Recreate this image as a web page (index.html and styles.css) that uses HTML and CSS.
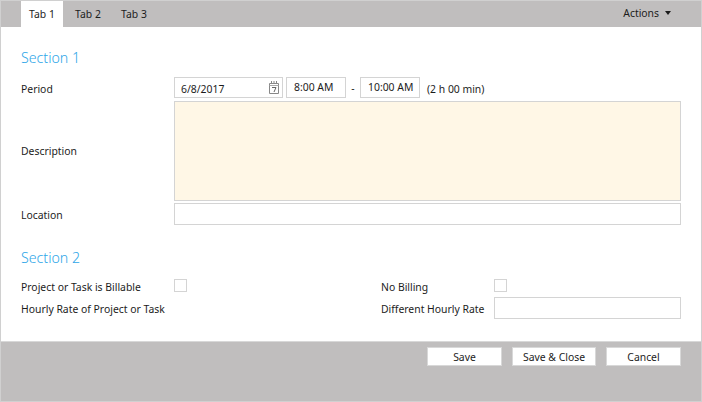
FILE: index.html
```html
<!DOCTYPE html>
<html lang="en">
<head>
  <meta charset="UTF-8" />
  <title>Edit entry</title>
  <link rel="stylesheet" href="styles.css">
</head>
<body>
  <div class="dialog">
    <div class="tabbar">
      <a class="tab active">Tab 1</a>
      <a class="tab">Tab 2</a>
      <a class="tab">Tab 3</a>
      <a class="actions">Actions<span class="caret"></span></a>
    </div>

    <div class="content">
      <h2 class="section-one">Section 1</h2>
      <div class="row period-row">
        <label class="low">Period</label>
        <div class="period">
          <div class="box date">
            <span>6/8/2017</span>
            <svg class="cal" width="10" height="13" viewBox="0 0 10 13">
              <path d="M0.5 2.5h9v10h-9z" fill="none" stroke="#888" />
              <path d="M0.5 4.5h9" stroke="#aaa" />
              <path d="M2.5 0v3M5 0v3M7.5 0v3" stroke="#888" />
              <path d="M3 6.5h4l-2 4.5" fill="none" stroke="#666" />
            </svg>
          </div>
          <div class="box time">8:00 AM</div>
          <span class="dash">-</span>
          <div class="box time">10:00 AM</div>
          <span class="duration">(2 h 00 min)</span>
        </div>
      </div>
      <div class="row desc-row">
        <label class="flat">Description</label>
        <div class="box desc"></div>
      </div>
      <div class="row loc-row">
        <label>Location</label>
        <div class="box field"></div>
      </div>

      <h2 class="section-two">Section 2</h2>
      <div class="columns">
        <label class="low">Project or Task is Billable</label>
        <div class="check"></div>
        <label class="low">No Billing</label>
        <div class="check"></div>
        <label>Hourly Rate of Project or Task</label>
        <div></div>
        <label>Different Hourly Rate</label>
        <div class="box field"></div>
      </div>
    </div>

    <div class="footer">
      <button class="btn save">Save</button>
      <button class="btn close">Save &amp; Close</button>
      <button class="btn save">Cancel</button>
    </div>
  </div>
</body>
</html>
```

FILE: styles.css
```css
* { box-sizing: border-box; }

body {
  margin: 0;
  font-family: "Noto Sans", "Open Sans", sans-serif;
  font-size: 10.4px;
  color: #1c1c1c;
  background: white;
}

label {
  white-space: nowrap;
  padding-top: 1px;
}
label.low { padding-top: 3px; }
label.flat { padding-top: 0; }

.dialog {
  width: 702px;
  height: 402px;
  border: 1px solid #d0d0d0;
  display: flex;
  flex-direction: column;
}

.tabbar {
  height: 26px;
  background: #c0bebe;
  display: flex;
  padding-left: 20px;
  flex: none;
}
.tab {
  width: 42px;
  height: 26px;
  line-height: 27px;
  text-align: center;
  margin-right: 4px;
}
.tab.active { background: white; }
.actions {
  margin-left: auto;
  margin-right: 30px;
  line-height: 24px;
}
.caret {
  display: inline-block;
  width: 0;
  height: 0;
  margin-left: 6px;
  vertical-align: 2px;
  border-left: 3.5px solid transparent;
  border-right: 3.5px solid transparent;
  border-top: 4px solid #1c1c1c;
}

.content {
  flex: 1;
  padding: 0 20px;
}
h2 {
  margin: 0;
  font-size: 14.2px;
  font-weight: 300;
  color: #2ea6e8;
  line-height: 20px;
}
.section-one { margin-top: 21px; margin-bottom: 9px; }
.section-two { margin-top: 23px; margin-bottom: 10px; }

.row {
  display: grid;
  grid-template-columns: 153px 507px;
  align-items: center;
}
.desc-row { margin-top: 3px; }
.loc-row { margin-top: 2px; }

.box {
  border: 1px solid #d4d4d4;
  background: white;
}
.period { display: flex; align-items: center; }
.date {
  width: 109px;
  height: 21px;
  padding: 0 3px 0 6px;
  display: flex;
  align-items: center;
  justify-content: space-between;
}
.date span { padding-top: 2px; }
.time {
  width: 60px;
  height: 21px;
  line-height: 19px;
  padding-left: 7px;
}
.date + .time { margin-left: 3px; }
.dash {
  width: 14px;
  text-align: center;
  padding-top: 1px;
}
.duration {
  margin-left: 7px;
  padding-top: 2px;
}
.desc { height: 100px; background: #fff7e6; }
.field { height: 22px; }

.columns {
  display: grid;
  grid-template-columns: 153px 207px 113px 187px;
  grid-template-rows: 15px 22px;
  row-gap: 4px;
  align-items: center;
}
.check {
  width: 13px;
  height: 13px;
  border: 1px solid #d4d4d4;
}

.footer {
  height: 60px;
  flex: none;
  background: #c0bebe;
  border-top: 1px solid #d8d8d8;
  display: flex;
  justify-content: flex-end;
  gap: 10px;
  padding: 5px 20px 0 0;
}
.btn {
  height: 19px;
  padding: 0;
  font: inherit;
  color: #1c1c1c;
  background: white;
  border: 1px solid #d8d8d8;
}
.save { width: 75px; }
.close { width: 84px; }
```
